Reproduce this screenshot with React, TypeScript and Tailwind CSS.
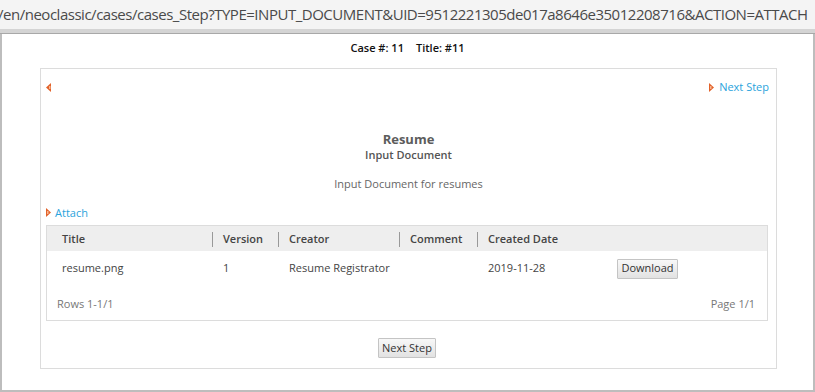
import React from "react";

function Arrow({ dir }: { dir: "left" | "right" }) {
  return (
    <svg width="6" height="9" viewBox="0 0 6 9" className="shrink-0">
      {dir === "left" ? (
        <polygon points="5,0 5,9 0,4.5" fill="#e2622a" />
      ) : (
        <polygon points="0,0 0,9 5,4.5" fill="#e2622a" />
      )}
      <rect x={dir === "left" ? 3 : 1} y="3" width="1.5" height="3" fill="#f6b48f" />
    </svg>
  );
}

const cols = [
  { label: "Title", w: "w-[166px]", pl: "pl-[15px]" },
  { label: "Version", w: "w-[66px]", pl: "pl-[10px]" },
  { label: "Creator", w: "w-[121px]", pl: "pl-[10px]" },
  { label: "Comment", w: "w-[78px]", pl: "pl-[10px]" },
  { label: "Created Date", w: "w-[139px]", pl: "pl-[10px]" },
];

export default function App() {
  const font = { fontFamily: '"Open Sans", "Liberation Sans", sans-serif' };
  return (
    <div className="w-[815px] h-[392px] overflow-hidden bg-white flex flex-col" style={font}>
      {/* address bar */}
      <div className="h-[29px] bg-[#f4f4f4] flex items-center overflow-hidden whitespace-nowrap">
        <span className="text-[15px] text-[#4a4a4a] -ml-[2px] tracking-[-0.48px]">
          /en/neoclassic/cases/cases_Step?TYPE=INPUT_DOCUMENT&amp;UID=9512221305de017a8646e35012208716&amp;ACTION=ATTACH
        </span>
      </div>
      <div className="h-[5px] bg-[#d4d4d4] border-b border-[#a8a8a8]" />

      <div className="flex-1 border-l-2 border-r-2 border-b-2 border-[#bdbdbd] flex flex-col">
        <div className="pt-[6px] text-center text-[11px] font-semibold text-[#111] leading-[15px]">
          Case #: 11<span className="inline-block w-[12px]" />Title: #11
        </div>

        <div className="mt-[13px] ml-[38px] w-[737px] h-[301px] border border-[#dcdcdc] flex flex-col">
          <div className="flex items-center justify-between pl-[5px] pr-[7px] pt-[11px] h-[26px]">
            <Arrow dir="left" />
            <a className="flex items-center gap-[4px] text-[11px] text-[#2aa3dc]">
              <Arrow dir="right" />
              Next Step
            </a>
          </div>

          <div className="mt-[36px] text-center">
            <div className="text-[13px] font-bold text-[#5c5c5c] leading-[16px]">Resume</div>
            <div className="text-[11px] font-semibold text-[#555] leading-[15px]">Input Document</div>
            <div className="mt-[14px] text-[11px] text-[#666] leading-[15px]">Input Document for resumes</div>
          </div>

          <a className="mt-[14px] ml-[5px] flex items-center gap-[3px] text-[11px] text-[#2aa3dc] leading-[15px]">
            <Arrow dir="right" />
            Attach
          </a>

          <div className="mt-[5px] ml-[5px] w-[722px] h-[96px] border border-[#dcdcdc] flex flex-col text-[11px]">
            <div className="h-[25px] bg-[#eeeeee] flex items-center pt-[1px] font-semibold text-[#444]">
              {cols.map((c, i) => (
                <div
                  key={c.label}
                  className={`${c.w} ${c.pl} h-[15px] flex items-center ${
                    i < cols.length - 1 ? "border-r border-[#999]" : ""
                  }`}
                >
                  {c.label}
                </div>
              ))}
            </div>
            <div className="h-[34px] flex items-center pt-[1px] text-[#444]">
              <div className="w-[166px] pl-[15px]">resume.png</div>
              <div className="w-[66px] pl-[10px]">1</div>
              <div className="w-[121px] pl-[10px]">Resume Registrator</div>
              <div className="w-[78px] pl-[10px]" />
              <div className="w-[139px] pl-[10px]">2019-11-28</div>
              <button className="w-[61px] h-[20px] border border-[#c4c4c4] bg-gradient-to-b from-[#f8f8f8] to-[#e2e2e2] text-[11px] text-[#333] rounded-[1px]">
                Download
              </button>
            </div>
            <div className="flex-1 flex items-center justify-between pt-[3px] pl-[10px] pr-[12px] text-[#777]">
              <span>Rows 1-1/1</span>
              <span>Page 1/1</span>
            </div>
          </div>

          <div className="mt-[17px] flex justify-center">
            <button className="-ml-[3px] w-[58px] h-[20px] border border-[#c4c4c4] bg-gradient-to-b from-[#f8f8f8] to-[#e2e2e2] text-[11px] text-[#333] rounded-[1px]">
              Next Step
            </button>
          </div>
        </div>
      </div>
    </div>
  );
}
